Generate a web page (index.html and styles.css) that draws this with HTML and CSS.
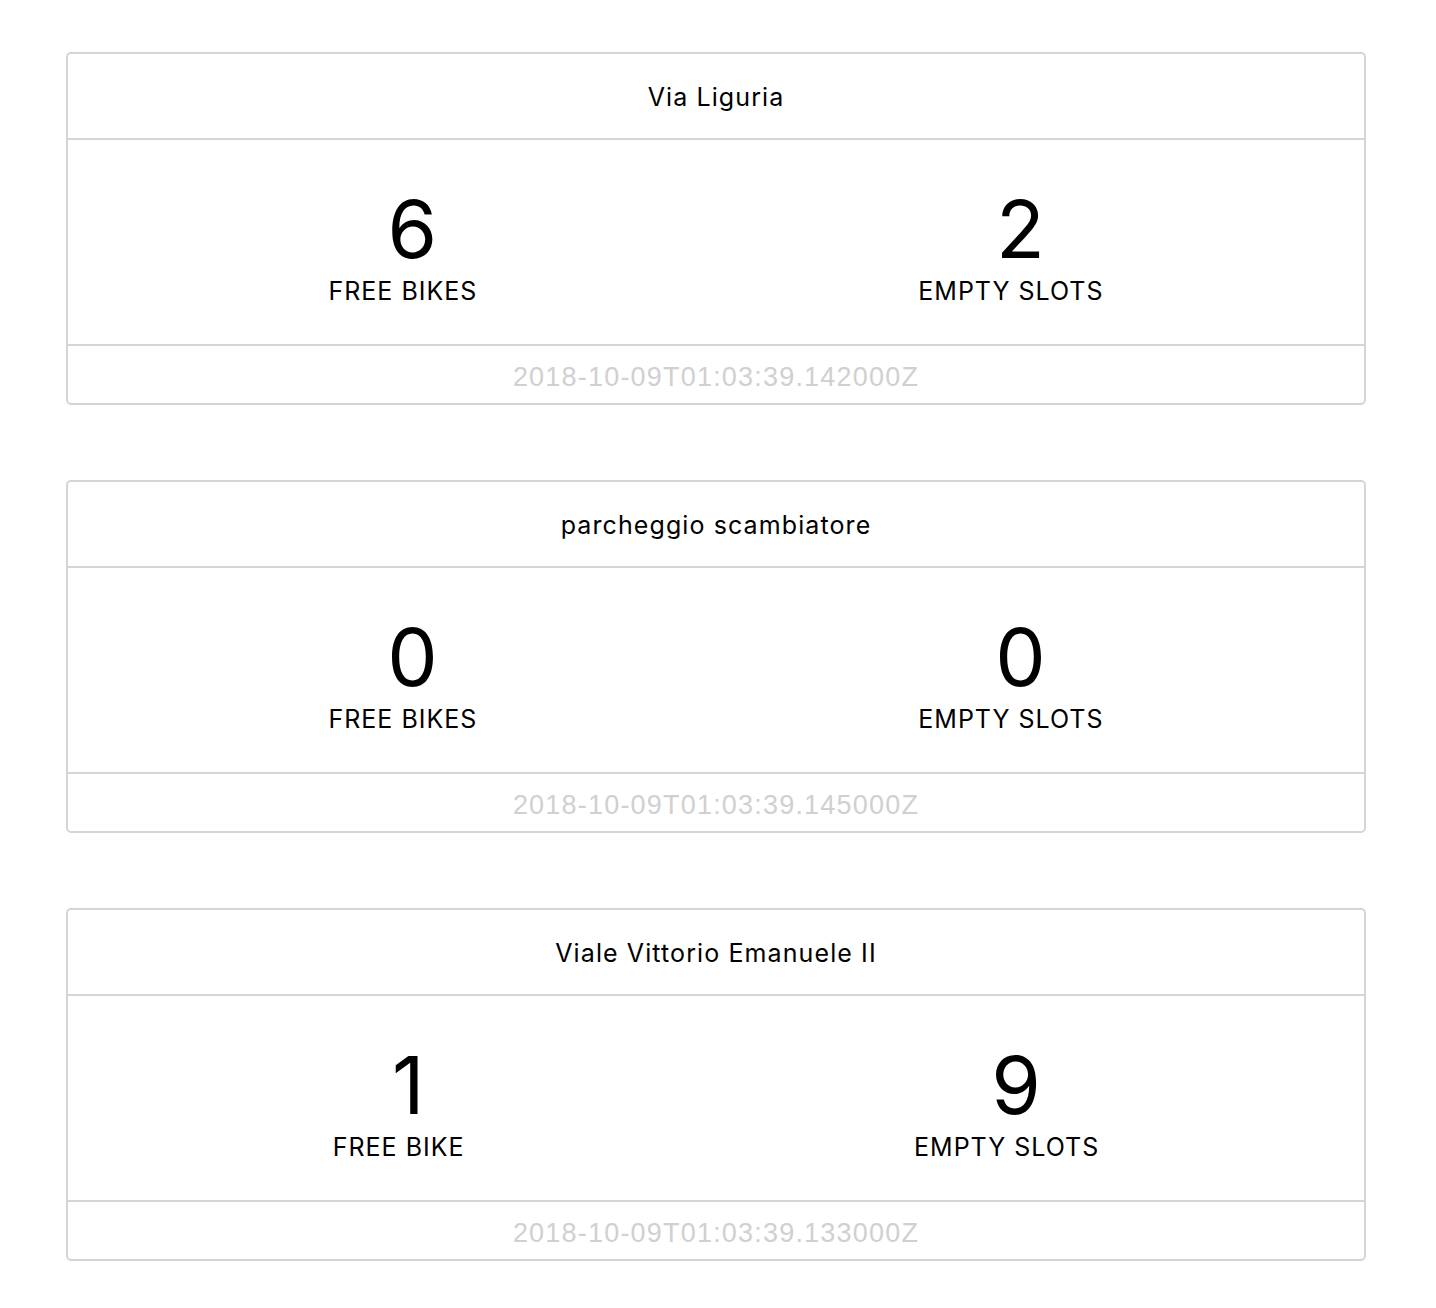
FILE: index.html
```html
<!DOCTYPE html>
<html>
<head>
<meta charset="utf-8">
<link rel="stylesheet" href="styles.css">
</head>
<body>
<div class="list">
  <div class="card">
    <div class="card-header">Via Liguria</div>
    <div class="card-body">
      <div class="stat"><div class="num">6</div><div class="label">FREE BIKES</div></div>
      <div class="stat"><div class="num">2</div><div class="label">EMPTY SLOTS</div></div>
    </div>
    <div class="card-footer">2018-10-09T01:03:39.142000Z</div>
  </div>
  <div class="card">
    <div class="card-header">parcheggio scambiatore</div>
    <div class="card-body">
      <div class="stat"><div class="num">0</div><div class="label">FREE BIKES</div></div>
      <div class="stat"><div class="num">0</div><div class="label">EMPTY SLOTS</div></div>
    </div>
    <div class="card-footer">2018-10-09T01:03:39.145000Z</div>
  </div>
  <div class="card">
    <div class="card-header">Viale Vittorio Emanuele II</div>
    <div class="card-body">
      <div class="stat"><div class="num">1</div><div class="label">FREE BIKE</div></div>
      <div class="stat"><div class="num">9</div><div class="label">EMPTY SLOTS</div></div>
    </div>
    <div class="card-footer">2018-10-09T01:03:39.133000Z</div>
  </div>
</div>
</body>
</html>
```
FILE: styles.css
```css
html, body {
  margin: 0;
  padding: 0;
  background: #ffffff;
}
body {
  font-family: Inter, "Noto Sans", sans-serif;
  color: #000;
}
.list {
  display: flex;
  flex-direction: column;
  gap: 75px;
  padding: 52px 0 40px 66px;
  width: 1300px;
}
.card {
  border: 2px solid #d5d5d5;
  border-radius: 5px;
  display: flex;
  flex-direction: column;
}
.card-header {
  height: 86px;
  display: flex;
  align-items: center;
  justify-content: center;
  font-size: 25px;
  letter-spacing: 1.1px;
  line-height: 1;
  padding-top: 2px;
  box-sizing: border-box;
  border-bottom: 2px solid #d5d5d5;
}
.card-body {
  display: flex;
  justify-content: space-around;
  padding: 49px 40px 40px;
  border-bottom: 2px solid #d5d5d5;
}
.stat {
  display: flex;
  flex-direction: column;
  align-items: center;
}
.num {
  font-size: 80px;
  line-height: 80px;
  padding-left: 19px;
}
.label {
  font-size: 25px;
  line-height: 25px;
  letter-spacing: 1px;
  margin-top: 10px;
}
.card-footer {
  height: 57px;
  display: flex;
  align-items: center;
  justify-content: center;
  font-family: "Liberation Sans", Arial, sans-serif;
  font-size: 27px;
  letter-spacing: 1.2px;
  color: #d0d0d0;
  padding-top: 5px;
  box-sizing: border-box;
}
```
